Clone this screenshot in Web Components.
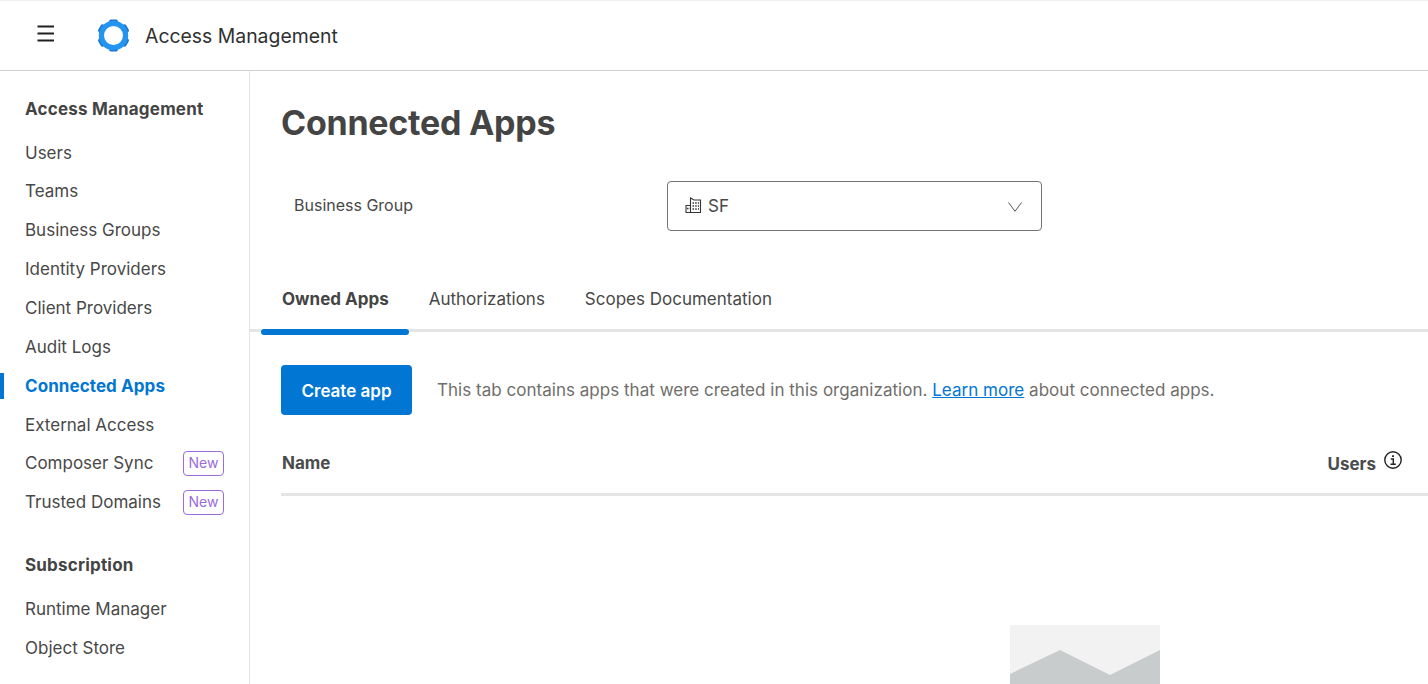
<!DOCTYPE html>
<html>
<head>
<meta charset="utf-8">
<style>
html, body { margin: 0; height: 684px; overflow: hidden; background: #fff; }
body { font-family: Inter, "Liberation Sans", sans-serif; color: #444; }
</style>
</head>
<body>
<am-app>
  <am-header slot="header">Access Management</am-header>
  <am-sidebar slot="sidebar">
    <am-nav-title>Access Management</am-nav-title>
    <am-nav-item>Users</am-nav-item>
    <am-nav-item>Teams</am-nav-item>
    <am-nav-item>Business Groups</am-nav-item>
    <am-nav-item>Identity Providers</am-nav-item>
    <am-nav-item>Client Providers</am-nav-item>
    <am-nav-item>Audit Logs</am-nav-item>
    <am-nav-item active>Connected Apps</am-nav-item>
    <am-nav-item>External Access</am-nav-item>
    <am-nav-item badge="New">Composer Sync</am-nav-item>
    <am-nav-item badge="New">Trusted Domains</am-nav-item>
    <am-nav-title second>Subscription</am-nav-title>
    <am-nav-item>Runtime Manager</am-nav-item>
    <am-nav-item>Object Store</am-nav-item>
  </am-sidebar>
  <am-main slot="main"></am-main>
</am-app>

<script>
function sheet(html) {
    const t = document.createElement('template');
    t.innerHTML = html;
    return t;
}

class Base extends HTMLElement {
    constructor() {
        super();
        this.attachShadow({ mode: 'open' });
        this.shadowRoot.appendChild(this.constructor.tpl.content.cloneNode(true));
    }
}

class AmApp extends Base {
    static tpl = sheet(`<style>
        :host { display: grid; grid-template-columns: 250px 1fr; grid-template-rows: 71px 613px; height: 684px; }
        ::slotted([slot=header]) { grid-column: 1 / 3; }
    </style>
    <slot name="header"></slot><slot name="sidebar"></slot><slot name="main"></slot>`);
}

// six dark teeth round the ring of the logo
const teeth = [0, 60, 120, 180, 240, 300]
    .map(a => `<rect x="12" y="0.4" width="9" height="4" rx="2" transform="rotate(${a} 16.5 16.5)"/>`)
    .join('');

class AmHeader extends Base {
    static tpl = sheet(`<style>
        :host { display: flex; align-items: center; box-sizing: border-box; height: 71px; padding-left: 37px;
            border-top: 1px solid #eeeeee; border-bottom: 1px solid #cfcfcf; font-size: 19.4px; color: #2f3031; }
        .burger { display: block; margin-top: -3px; }
        .logo { display: block; margin-left: 42px; margin-right: 15px; }
    </style>
    <svg class="burger" width="18" height="18" viewBox="0 0 18 18" fill="none" stroke="#1f2021" stroke-width="1.8">
        <path d="M0.5 1.5H17M0.5 8.5H17M0.5 15.5H17"/>
    </svg>
    <svg class="logo" width="33" height="33" viewBox="0 0 33 33">
        <g fill="#1f74c8">${teeth}</g>
        <circle cx="16.5" cy="16.5" r="12.1" fill="none" stroke="#2394ef" stroke-width="5.2"/>
    </svg>
    <slot></slot>`);
}

class AmSidebar extends Base {
    static tpl = sheet(`<style>
        :host { display: block; box-sizing: border-box; border-right: 1px solid #e4e4e4; padding-top: 19px; overflow: hidden; }
    </style><slot></slot>`);
}

class AmNavTitle extends Base {
    static tpl = sheet(`<style>
        :host { display: flex; align-items: center; height: 38px; margin-bottom: 5.2px; padding-left: 25px;
            font-size: 17px; font-weight: 700; letter-spacing: .2px; color: #444; }
        :host([second]) { margin-top: 24.8px; }
    </style><slot></slot>`);
}

class AmNavItem extends Base {
    static tpl = sheet(`<style>
        :host { display: flex; align-items: center; justify-content: space-between; box-sizing: border-box;
            height: 38.85px; padding: 0 25px 0 25px; font-size: 17px; color: #484848; }
        :host([active]) { color: #0176d3; font-weight: 700; letter-spacing: .08px; }
        :host([active]) .bar { display: block; }
        .bar { display: none; position: absolute; left: 0; width: 4px; height: 26px; background: #0176d3; }
        .badge { display: none; box-sizing: border-box; height: 25px; width: 41px; border: 1px solid #9b6cdc; border-radius: 4px;
            color: #9b6cdc; font-size: 14px; line-height: 22px; text-align: center; }
    </style><span class="bar"></span><span><slot></slot></span><span class="badge"></span>`);

    connectedCallback() {
        const badge = this.getAttribute('badge');
        if (badge) {
            const b = this.shadowRoot.querySelector('.badge');
            b.textContent = badge;
            b.style.display = 'block';
        }
    }
}

class AmSelect extends Base {
    static tpl = sheet(`<style>
        :host { display: flex; align-items: center; box-sizing: border-box; width: 375px; height: 50px;
            border: 1px solid #747474; border-radius: 4px; padding: 0 19px 0 17px; font-size: 17px; color: #484848; }
        svg.b { display: block; margin: -2px 6px 0 0; }
        svg.c { display: block; margin-top: 2px; }
        span { flex: 1; }
    </style>
    <svg class="b" width="17" height="17" viewBox="0 0 17 17" fill="none" stroke="#333" stroke-width="1.1">
        <path d="M5.5 15.5V1L9 3H15.5V15.5M0.6 15.5H16M1 15.5V8.5H5.5"/>
        <path stroke-width="1.5" stroke-dasharray="1.5 1.2" d="M7.5 6H14M7.5 9H14M7.5 12H14M2 11.5H5"/>
    </svg>
    <span><slot></slot></span>
    <svg class="c" width="14" height="10" viewBox="0 0 14 10" fill="none" stroke="#555" stroke-width="1"><path d="M.5 .5L7 9.3L13.5 .5"/></svg>`);
}

class AmTabs extends Base {
    static tpl = sheet(`<style>
        :host { display: flex; box-sizing: border-box; height: 71px; border-bottom: 3px solid #e5e5e5; padding-left: 11px; }
        a { display: block; position: relative; box-sizing: border-box; height: 74px; padding: 0 20px; line-height: 76px; font-size: 17px; color: #484848; }
        a.on { padding-left: 21px; font-weight: 700; color: #444; }
        a.on::after { content: ""; position: absolute; left: 0; right: 0; bottom: 0; height: 6px; background: #0176d3; border-radius: 3px; }
    </style>
    <a class="on">Owned Apps</a><a>Authorizations</a><a>Scopes Documentation</a>`);
}

class AmMain extends Base {
    static tpl = sheet(`<style>
        :host { display: block; overflow: hidden; height: 613px; }
        h1 { margin: 0; padding: 30px 0 0 31px; height: 80px; box-sizing: border-box; font-size: 34px; line-height: 44px; font-weight: 700; color: #444; letter-spacing: -.25px; }
        .field { display: flex; align-items: center; margin: 30px 0 0 44px; }
        .field label { width: 373px; margin-top: -2px; font-size: 16px; color: #484848; }
        am-tabs { margin-top: 30px; }
        .actions { display: flex; align-items: center; gap: 25px; padding: 33px 0 0 31px; }
        button { width: 131px; height: 50px; border: 0; border-radius: 4px; padding: 1px 0 0; background: #0176d3; color: #fff; font: 600 17px Inter, "Liberation Sans", sans-serif; }
        .actions p { margin: 0; font-size: 17px; letter-spacing: .025px; color: #706e6b; }
        .actions a { color: #0176d3; text-decoration: underline; }
        .thead { display: flex; justify-content: space-between; align-items: center; box-sizing: border-box; height: 81px; margin-left: 31px;
            padding: 18px 26px 0 1px; border-bottom: 3px solid #e5e5e5; font-size: 17px; font-weight: 700; color: #4a4b4c; }
        .users { display: flex; align-items: flex-start; gap: 8px; margin-top: 1px; }
        .users svg { display: block; margin-top: -3px; }
        .empty { display: block; margin: 129px 0 0 760px; }
    </style>
    <h1>Connected Apps</h1>
    <div class="field"><label>Business Group</label><am-select>SF</am-select></div>
    <am-tabs></am-tabs>
    <div class="actions"><button>Create app</button><p>This tab contains apps that were created in this organization. <a>Learn more</a> about connected apps.</p></div>
    <div class="thead"><span>Name</span><span class="users">Users
        <svg width="18" height="18" viewBox="0 0 18 18" fill="none" stroke="#222" stroke-width="1.4"><circle cx="9" cy="9" r="8.2"/><path d="M6.8 8H9.3V13M6.5 13.2H11.8"/><path d="M9 4.2V6" stroke-width="1.9"/></svg>
    </span></div>
    <svg class="empty" width="150" height="60" viewBox="0 0 150 60">
        <rect width="150" height="60" fill="#f2f2f2"/>
        <path d="M0 49L50 25L100 50L150 25V60H0Z" fill="#c9cccc"/>
    </svg>`);
}

customElements.define('am-app', AmApp);
customElements.define('am-header', AmHeader);
customElements.define('am-sidebar', AmSidebar);
customElements.define('am-nav-title', AmNavTitle);
customElements.define('am-nav-item', AmNavItem);
customElements.define('am-select', AmSelect);
customElements.define('am-tabs', AmTabs);
customElements.define('am-main', AmMain);
</script>
</body>
</html>
